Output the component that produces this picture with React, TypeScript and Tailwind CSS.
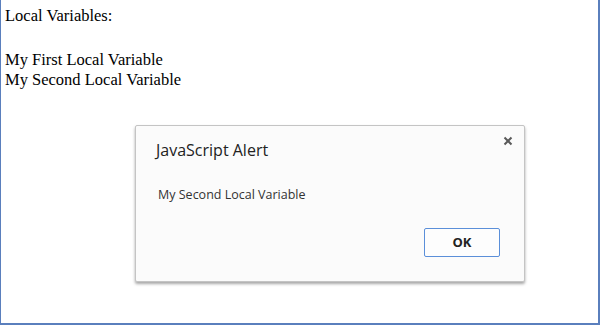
import React from "react";

export default function App() {
  return (
    <div className="w-[600px] h-[325px] bg-white border-l border-r-2 border-b-2 border-[#5a7fbd] relative overflow-hidden">
      <div className="pl-[4px] pt-[6px] text-[16.5px] leading-[20px] text-black" style={{ fontFamily: '"Liberation Serif", serif' }}>
        <div>Local Variables:</div>
        <div className="h-[24px]" />
        <div>My First Local Variable</div>
        <div>My Second Local Variable</div>
      </div>
      <div
        className="absolute left-[134px] top-[125px] w-[390px] h-[157px] bg-[#fbfbfb] border border-[#c4c4c4] rounded-[2px] shadow-[0_2px_3px_rgba(0,0,0,0.35)] flex flex-col"
        style={{ fontFamily: '"Open Sans", "Noto Sans", sans-serif' }}
      >
        <svg width="10" height="10" viewBox="0 0 10 10" className="absolute right-[11px] top-[10px]">
          <path d="M1.5 1.5 L8.5 8.5 M8.5 1.5 L1.5 8.5" stroke="#5a5a5a" strokeWidth="2" />
        </svg>
        <div className="pl-[20px] pt-[13px] text-[16px] leading-[22px] text-[#222]">JavaScript Alert</div>
        <div className="pl-[22px] pt-[26px] text-[12.5px] leading-[16px] text-[#333]">My Second Local Variable</div>
        <div className="flex justify-end pr-[24px] pt-[25px]">
          <button className="w-[76px] h-[29px] border border-[#5b8fd9] rounded-[2px] bg-[#fdfdfd] text-[13px] font-bold text-[#222]">OK</button>
        </div>
      </div>
    </div>
  );
}
